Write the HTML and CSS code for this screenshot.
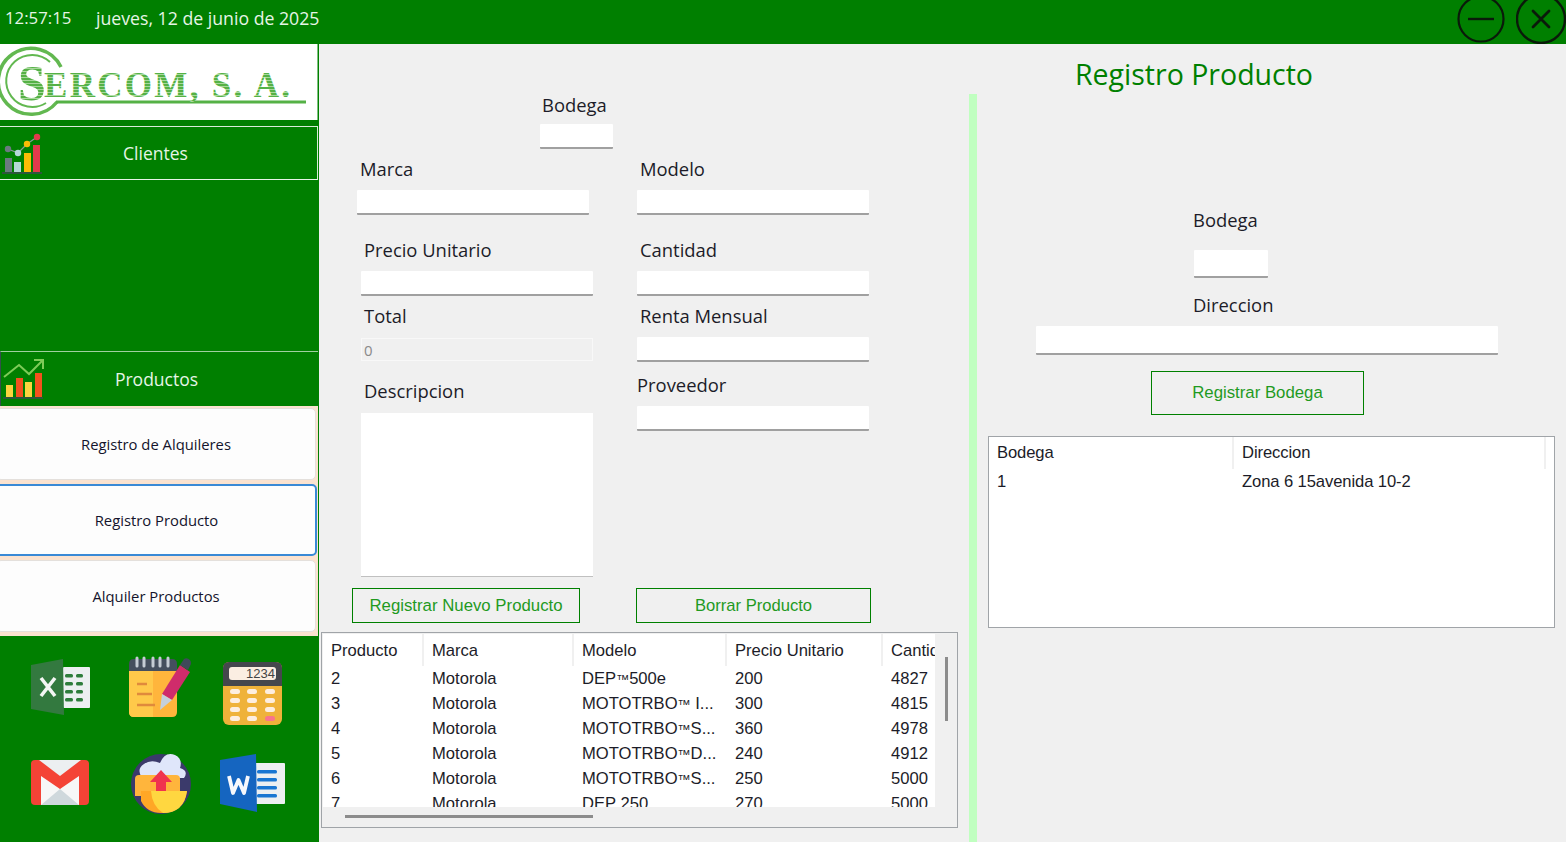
FILE: index.html
```html
<!DOCTYPE html>
<html lang="es">
<head>
<meta charset="utf-8">
<title>Registro Producto</title>
<link rel="stylesheet" href="styles.css">
</head>
<body>
<header class="topbar">
  <div class="clock"><span class="time">12:57:15</span><span class="date">jueves, 12 de junio de 2025</span></div>
  <div class="winctl">
    <svg class="winbtn" viewBox="1456 0 50 44"><circle cx="1481" cy="19" r="22.5" fill="none" stroke="#0a1a0a" stroke-width="2.2"/><path d="M1468 19H1494" stroke="#0a1a0a" stroke-width="2.4"/></svg>
    <svg class="winbtn" viewBox="1516 0 50 44"><circle cx="1541" cy="19" r="24" fill="none" stroke="#0a1a0a" stroke-width="2.4"/><path d="M1533 11L1549 27M1549 11L1533 27" stroke="#0a1a0a" stroke-width="2.8" stroke-linecap="round"/></svg>
  </div>
</header>
<div class="app">
  <aside class="sidebar">
    <div class="logo">
      <svg viewBox="0 44 317 76" width="317" height="76">
        <defs>
          <pattern id="stripes" width="3" height="3" patternUnits="userSpaceOnUse">
            <rect width="3" height="2" fill="#55b146"/><rect y="2" width="3" height="1" fill="#a8d89c"/>
          </pattern>
        </defs>
        <g fill="none" stroke="#62b850">
          <path d="M61 67A33 33 0 1 0 57 102" stroke-width="3.5"/>
          <path d="M50 62A26 26 0 1 0 46 103" stroke-width="2"/>
        </g>
        <path d="M56 102H306" stroke="#55b146" stroke-width="3" fill="none"/>
        <text class="logo-s" x="18" y="100" fill="url(#stripes)">S</text>
        <text class="logo-t" x="44" y="97" fill="url(#stripes)">ERCOM, S. A.</text>
      </svg>
    </div>
    <button class="menu menu-clientes">
      <svg viewBox="0 128 44 48" width="44" height="48">
        <path d="M8 148L18 152L27 143L37 136" stroke="#8a9a9a" stroke-width="1.2" fill="none"/>
        <rect x="5" y="157" width="7" height="14" fill="#6b7a80"/>
        <rect x="14" y="161" width="7" height="10" fill="#b6d8d8"/>
        <rect x="24" y="152" width="7" height="19" fill="#fbbc05"/>
        <rect x="33" y="144" width="7" height="27" fill="#e23a4c"/>
        <circle cx="8" cy="148" r="3.2" fill="#6b7a80"/>
        <circle cx="18" cy="152" r="3.2" fill="#b6d8d8"/>
        <circle cx="27" cy="143" r="3.2" fill="#fbbc05"/>
        <circle cx="37" cy="136" r="3.2" fill="#e23a4c"/>
        <path d="M2 172H42" stroke="#3c4a50" stroke-width="1.6"/>
      </svg>
      <span class="menu-label">Clientes</span>
    </button>
    <div class="sub-empty"></div>
    <button class="menu menu-productos">
      <svg viewBox="0 356 44 48" width="44" height="48">
        <rect x="5" y="386" width="7" height="12" fill="#fdd33f"/>
        <rect x="15" y="379" width="7" height="19" fill="#f4511e"/>
        <rect x="24" y="383" width="7" height="15" fill="#fdd33f"/>
        <rect x="34" y="374" width="7" height="24" fill="#f4511e"/>
        <path d="M2 399H42" stroke="#3c4a50" stroke-width="1.6"/>
        <path d="M3 378L18 366L28 375L41 362M33 361H42V370" stroke="#7ecb58" stroke-width="2" fill="none"/>
      </svg>
      <span class="menu-label">Productos</span>
    </button>
    <nav class="submenu">
      <button class="subitem">Registro de Alquileres</button>
      <button class="subitem subitem-active">Registro Producto</button>
      <button class="subitem">Alquiler Productos</button>
    </nav>
    <div class="apps">
      <svg class="app-icon" viewBox="20 646 80 80">
        <rect x="63" y="666" width="27" height="41" rx="1" fill="#eceff1"/>
        <g fill="#2e7d3c"><rect x="65" y="673" width="8" height="3.5" rx="1.5"/><rect x="76" y="673" width="7" height="3.5" rx="1.5"/><rect x="65" y="681" width="8" height="3.5" rx="1.5"/><rect x="76" y="681" width="7" height="3.5" rx="1.5"/><rect x="65" y="689" width="8" height="3.5" rx="1.5"/><rect x="76" y="689" width="7" height="3.5" rx="1.5"/><rect x="65" y="697" width="8" height="3.5" rx="1.5"/><rect x="76" y="697" width="7" height="3.5" rx="1.5"/></g>
        <path d="M31 664L63 658L64 714L31 708Z" fill="#33793f"/>
        <path d="M41 677L55 695M55 677L41 695" stroke="#f4f6f4" stroke-width="3.6"/>
      </svg>
      <svg class="app-icon" viewBox="116 646 80 80">
        <path d="M129 669H177V711Q177 716 172 716H134Q129 716 129 711Z" fill="#ffb53c"/>
        <path d="M129 669H153V716H134Q129 716 129 711Z" fill="#ffc94a"/>
        <path d="M129 670V663Q129 658 134 658H172Q177 658 177 663V670Z" fill="#454f5e"/>
        <g stroke="#c5ccd4" stroke-width="3" stroke-linecap="round"><path d="M137 657V665M144 657V665M153 657V665M160 657V665M168 657V665"/></g>
        <g stroke="#e08a3c" stroke-width="2.4"><path d="M137 683H147M137 693H152M137 704H155"/></g>
        <path d="M162 693L180 664L190 671L172 699Z" fill="#cf2c6b"/>
        <path d="M180 664L184 658Q187 656 190 659Q192 662 190 665L188 669Z" fill="#3f4a5a"/>
        <path d="M162 693L172 699L160 709Z" fill="#c5d0dc"/>
      </svg>
      <svg class="app-icon" viewBox="212 646 80 80">
        <rect x="223" y="661" width="59" height="63" rx="6" fill="#efb23a"/>
        <path d="M223 685V667Q223 661 229 661H276Q282 661 282 667V685Z" fill="#45474d"/>
        <rect x="229" y="666" width="47" height="13" rx="3" fill="#fbeee2"/>
        <text class="calc-num" x="275" y="677" text-anchor="end">1234</text>
        <g fill="#fdeee0"><rect x="230" y="688" width="10" height="5" rx="2.5"/><rect x="247" y="688" width="10" height="5" rx="2.5"/><rect x="265" y="688" width="10" height="5" rx="2.5"/><rect x="230" y="697" width="10" height="5" rx="2.5"/><rect x="247" y="697" width="10" height="5" rx="2.5"/><rect x="265" y="697" width="10" height="5" rx="2.5"/><rect x="230" y="706" width="10" height="5" rx="2.5"/><rect x="247" y="706" width="10" height="5" rx="2.5"/><rect x="265" y="706" width="10" height="5" rx="2.5"/><rect x="230" y="715" width="10" height="5" rx="2.5"/><rect x="247" y="715" width="10" height="5" rx="2.5"/></g>
        <rect x="265" y="715" width="10" height="5" rx="2.5" fill="#f9748c"/>
      </svg>
      <svg class="app-icon" viewBox="20 741 80 80">
        <rect x="31" y="759" width="58" height="45" rx="4" fill="#f44336"/>
        <path d="M39 759H81L60 775Z" fill="#eceff1"/>
        <path d="M41 775L60 788L79 775V804H41Z" fill="#f7f7f7"/>
        <path d="M41 804L60 788L79 804Z" fill="#cfd8dc"/>
      </svg>
      <svg class="app-icon" viewBox="116 741 80 80">
        <circle cx="161" cy="783" r="30" fill="#3b3a6b"/>
        <path d="M142 777Q136 768 144 763Q151 758 160 762Q165 750 175 754Q183 758 180 767Q189 770 184 777Z" fill="#dfe6fa"/>
        <path d="M135 778Q135 774 139 774H176Q180 774 180 778V795H135Z" fill="#ffb53c"/>
        <path d="M161 769L172 781H166V792H156V781H150Z" fill="#f0344e"/>
        <path d="M141 790H187Q184 812 161 812Q147 812 141 800Z" fill="#ffa726"/>
        <path d="M151 790H187Q184 812 163 812Q152 805 151 790Z" fill="#ffd740"/>
      </svg>
      <svg class="app-icon" viewBox="212 741 80 80">
        <rect x="254" y="762" width="31" height="41" rx="1" fill="#eceff1"/>
        <g fill="#1976d2"><rect x="257" y="769" width="20" height="3.5" rx="1.5"/><rect x="257" y="777" width="20" height="3.5" rx="1.5"/><rect x="257" y="785" width="20" height="3.5" rx="1.5"/><rect x="257" y="793" width="20" height="3.5" rx="1.5"/></g>
        <path d="M220 759L256 753L257 811L220 803Z" fill="#1565c0"/>
        <path d="M229 775L233 792L238.500 779L244 792L248 775" fill="none" stroke="#f6f8fc" stroke-width="3.8" stroke-linejoin="round"/>
      </svg>
    </div>
  </aside>

  <main class="content">
    <section class="form-pane">
      <div class="fields">
        <div class="field-bodega">
          <label class="lbl lbl-bodega">Bodega</label>
          <div class="input input-bodega"></div>
        </div>
        <div class="cols">
          <div class="col col-left">
            <label class="lbl lbl-marca">Marca</label>
            <div class="input input-marca"></div>
            <label class="lbl lbl-precio">Precio Unitario</label>
            <div class="input input-std"></div>
            <label class="lbl lbl-total">Total</label>
            <div class="input-disabled">0</div>
            <label class="lbl lbl-desc">Descripcion</label>
            <div class="textarea"></div>
            <button class="btn btn-nuevo">Registrar Nuevo Producto</button>
          </div>
          <div class="col col-right">
            <label class="lbl lbl-modelo">Modelo</label>
            <div class="input input-std"></div>
            <label class="lbl lbl-cantidad">Cantidad</label>
            <div class="input input-std"></div>
            <label class="lbl lbl-renta">Renta Mensual</label>
            <div class="input input-std"></div>
            <label class="lbl lbl-prov">Proveedor</label>
            <div class="input input-std"></div>
            <button class="btn btn-borrar">Borrar Producto</button>
          </div>
        </div>
      </div>
      <div class="grid-box grid-productos">
        <div class="grid-view">
          <table class="grid grid-p">
            <thead><tr><th class="c1">Producto</th><th class="c2">Marca</th><th class="c3">Modelo</th><th class="c4">Precio Unitario</th><th class="c5">Cantidad</th></tr></thead>
            <tbody>
              <tr><td>2</td><td>Motorola</td><td>DEP<span class="tm">™</span>500e</td><td>200</td><td>4827</td></tr>
              <tr><td>3</td><td>Motorola</td><td>MOTOTRBO<span class="tm">™</span> I...</td><td>300</td><td>4815</td></tr>
              <tr><td>4</td><td>Motorola</td><td>MOTOTRBO<span class="tm">™</span>S...</td><td>360</td><td>4978</td></tr>
              <tr><td>5</td><td>Motorola</td><td>MOTOTRBO<span class="tm">™</span>D...</td><td>240</td><td>4912</td></tr>
              <tr><td>6</td><td>Motorola</td><td>MOTOTRBO<span class="tm">™</span>S...</td><td>250</td><td>5000</td></tr>
              <tr><td>7</td><td>Motorola</td><td>DEP 250</td><td>270</td><td>5000</td></tr>
            </tbody>
          </table>
        </div>
        <div class="vscroll"></div>
        <div class="hscroll"></div>
      </div>
    </section>
    <div class="divider"></div>
    <section class="right-pane">
      <h1 class="title">Registro Producto</h1>
      <label class="lbl lbl-r-bodega">Bodega</label>
      <div class="input input-r-bodega"></div>
      <label class="lbl lbl-r-dir">Direccion</label>
      <div class="input input-r-dir"></div>
      <button class="btn btn-bodega">Registrar Bodega</button>
      <div class="grid-box grid-bodegas">
        <table class="grid grid-b">
          <thead><tr><th class="b1">Bodega</th><th class="b2">Direccion</th></tr></thead>
          <tbody><tr><td>1</td><td>Zona 6 15avenida 10-2</td></tr></tbody>
        </table>
      </div>
    </section>
  </main>
</div>
</body>
</html>
```
FILE: styles.css
```css
* { box-sizing: border-box; }
html, body { margin: 0; height: 100%; }
body {
  width: 1566px;
  height: 842px;
  overflow: hidden;
  background: #f0f0f0;
  font-family: "Open Sans", "Noto Sans", sans-serif;
  color: #1c1c28;
}
button { font: inherit; cursor: pointer; padding: 0; }

/* top bar */
.topbar {
  height: 44px;
  background: #007f00;
  display: flex;
  justify-content: space-between;
  overflow: hidden;
}
.clock { display: flex; color: #e6f5e6; font-size: 17.7px; line-height: 36px; padding-left: 5px; }
.time { width: 91px; font-size: 16.8px; }
.winctl { display: flex; gap: 10px; }
.winbtn { width: 50px; height: 44px; display: block; }

.app { display: flex; height: 798px; }

/* sidebar */
.sidebar { width: 319px; flex: none; background: #007f00; display: flex; flex-direction: column; }
.logo { width: 318px; height: 76px; background: #fff; border-right: 1px solid #7fbf7f; flex: none; margin-bottom: 6px; overflow: hidden; }
.logo svg { display: block; }
.logo-s { font: 700 50px "Liberation Serif", serif; }
.logo-t { font: 700 35px "Liberation Serif", serif; letter-spacing: 2.3px; }
.menu {
  display: grid;
  grid-template-columns: 44px 1fr 50px;
  align-items: center;
  width: 318px;
  flex: none;
  background: #007f00;
  color: #e6f5e6;
  border: 0;
  text-align: center;
  font-size: 17.5px;
}
.menu svg { display: block; }
.menu-label { grid-column: 2; }
.menu-clientes { height: 54px; border-top: 1px solid #d8ecd8; border-bottom: 1px solid #e8f4e8; border-right: 1px solid #d8ecd8; }
.sub-empty { height: 171px; flex: none; }
.menu-productos { height: 55px; border-top: 1px solid #9fd09f; border-left: 1px solid #33504a; }
.submenu {
  width: 318px;
  height: 230px;
  flex: none;
  background: #fbe3d0;
  display: flex;
  flex-direction: column;
  gap: 4px;
  padding-top: 2px;
  overflow: hidden;
}
.subitem {
  height: 72px;
  width: 320px;
  margin-left: -4px;
  background: #fdfdfd;
  border: 1px solid #e4e0dc;
  border-radius: 5px;
  color: #14142c;
  font-size: 14.8px;
}
.subitem-active { border: 2px solid #3a8ad6; width: 321px; }
.apps {
  flex: 1;
  display: grid;
  grid-template-columns: repeat(3, 80px);
  grid-template-rows: repeat(2, 80px);
  column-gap: 16px;
  row-gap: 15px;
  padding: 11px 0 0 20px;
}
.app-icon { width: 80px; height: 80px; display: block; }
.calc-num { font: 13px "Liberation Sans", sans-serif; fill: #444; }

/* content */
.content { flex: 1; display: flex; min-width: 0; }
.form-pane { width: 650px; flex: none; }
.fields { height: 588px; padding-top: 50px; }
.divider { width: 8px; flex: none; margin-top: 50px; background: #c0ffc0; }
.right-pane { flex: 1; display: flex; flex-direction: column; align-items: flex-start; position: relative; }

.lbl { display: block; font-size: 18.4px; line-height: 24px; height: 24px; color: #1c1c28; }
.fields .lbl { line-height: 22px; }
.input { background: #fff; border-bottom: 2px solid #a0a0a0; border-radius: 1px; }
.input-std { width: 232px; height: 25px; }

.field-bodega { margin-left: 221px; }
.lbl-bodega { margin-left: 2px; }
.input-bodega { width: 73px; height: 25px; margin-top: 6px; }

.cols { display: flex; }
.col { display: flex; flex-direction: column; align-items: flex-start; }
.col-left { width: 318px; }
.col-right { width: 300px; }

.lbl-marca { margin: 9px 0 0 41px; }
.input-marca { width: 232px; height: 25px; margin: 8px 0 0 38px; }
.lbl-precio { margin: 24px 0 0 45px; }
.col-left .input-std { margin: 8px 0 0 42px; }
.lbl-total { margin: 9px 0 0 45px; }
.input-disabled {
  width: 232px;
  height: 23px;
  margin: 9px 0 0 42px;
  border: 1px solid #f8f8f8;
  color: #8a8a8a;
  font-size: 15px;
  line-height: 22px;
  padding-left: 2px;
}
.lbl-desc { margin: 19px 0 0 45px; }
.textarea {
  width: 232px;
  height: 164px;
  margin: 9px 0 0 42px;
  background: #fff;
  border-bottom: 1px solid #c0c0c0;
}
.btn {
  background: transparent;
  border: 1px solid #008000;
  color: #1f9a1f;
  font-family: "Liberation Sans", sans-serif;
  font-size: 16.8px;
}
.btn-nuevo { width: 228px; height: 35px; margin: 11px 0 0 33px; }

.lbl-modelo { margin: 9px 0 0 3px; }
.col-right .input-std { margin-top: 8px; }
.lbl-cantidad { margin: 24px 0 0 3px; }
.lbl-renta { margin: 9px 0 0 3px; }
.lbl-prov { margin: 12px 0 0 0; }
.btn-borrar { width: 235px; height: 35px; margin: 157px 0 0 -1px; font-size: 16.6px; }

.grid-box { background: #f0f0f0; border: 1px solid #a0a4a8; position: relative; }
.grid-productos { width: 637px; height: 196px; margin: 0 0 0 2px; }
.grid-view { width: 612px; height: 173px; background: #fff; overflow: hidden; margin-left: 1px; margin-top: 1px; }
.grid { border-collapse: collapse; table-layout: fixed; font-family: "Liberation Sans", sans-serif; font-size: 16.6px; color: #1c1c28; background: #fff; }
.grid th { font-weight: 400; text-align: left; height: 32px; padding: 0 0 0 8px; white-space: nowrap; overflow: hidden; box-shadow: inset -2px 0 #f0f0f0; }
.grid-p th { padding-top: 2px; }
.grid td { height: 25px; padding: 0 0 0 8px; white-space: nowrap; overflow: hidden; }
.tm { font-size: 13px; }
.grid-p { width: 683px; }
.c1 { width: 101px; }
.c2 { width: 150px; }
.c3 { width: 153px; }
.c4 { width: 156px; }
.c5 { width: 123px; }
.vscroll { position: absolute; left: 623px; top: 24px; width: 3px; height: 64px; background: #8c8c8c; }
.hscroll { position: absolute; left: 23px; top: 182px; width: 248px; height: 3px; background: #8c8c8c; }

/* right pane */
.title { position: absolute; left: 98px; top: 10px; margin: 0; font-size: 28.5px; line-height: 40px; font-weight: 400; color: #008000; white-space: nowrap; }
.lbl-r-bodega { margin: 164px 0 0 216px; }
.input-r-bodega { width: 74px; height: 28px; margin: 18px 0 0 217px; }
.lbl-r-dir { margin: 15px 0 0 216px; }
.input-r-dir { width: 462px; height: 29px; margin: 9px 0 0 59px; }
.btn-bodega { width: 213px; height: 44px; margin: 16px 0 0 174px; border-width: 1.5px; }
.grid-bodegas { width: 567px; height: 192px; margin: 21px 0 0 11px; background: #fff; }
.grid-b { width: 557px; letter-spacing: -0.1px; }
.b1 { width: 245px; }
.b2 { width: 312px; }
```
